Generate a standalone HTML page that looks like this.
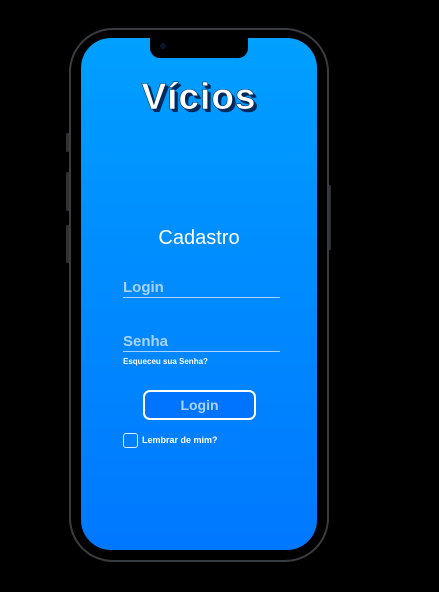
<!DOCTYPE html>
<html><head><meta charset="utf-8">
<style>
html,body{margin:0;padding:0;background:#000;width:439px;height:592px;overflow:hidden;font-family:"Liberation Sans",sans-serif}
.frame{position:absolute;left:69px;top:28px;width:256px;height:530px;border:2px solid #3a3d40;border-radius:44px;background:#000}
.btn{position:absolute;width:3px;background:#2e3134;border-radius:1px}
.screen{position:absolute;left:81px;top:38px;width:236px;height:512px;border-radius:30px;background:linear-gradient(#00a0ff 0%,#0090ff 35%,#0078ff 100%);overflow:hidden}
.notch{position:absolute;left:69px;top:0;width:98px;height:20px;background:#000;border-radius:0 0 10px 10px}
.cam{position:absolute;left:10px;top:5px;width:6px;height:6px;border-radius:50%;background:#0a1430}
.logo{position:absolute;left:0;width:100%;top:38px;text-align:center;font-size:37px;font-weight:900;color:#fff;letter-spacing:1px;text-shadow:2px 2px 0 #002a5a,3px 3px 0 #002a5a;-webkit-text-stroke:0.6px #003070}
.title{position:absolute;left:0;width:100%;top:189px;text-align:center;color:#fff;font-size:20px}
.field{position:absolute;left:42px;width:157px;border-bottom:1px solid #a9d3ff;color:#a9d3ff;font-weight:bold;font-size:15px;padding-bottom:1px}
.small{position:absolute;left:42px;top:319px;color:#fff;font-size:8px;font-weight:bold}
.lbtn{position:absolute;left:62px;top:352px;width:109px;height:26px;border:2px solid #fff;border-radius:7px;box-sizing:content-box;color:#a9d3ff;font-weight:bold;font-size:14px;text-align:center;line-height:26px;background:#0074ff}
.chk{position:absolute;left:42px;top:395px;width:13px;height:13px;border:1.5px solid #dfeeff;border-radius:3px}
.rem{position:absolute;left:61px;top:397px;color:#fff;font-size:9px;font-weight:bold}
</style></head><body>
<div class="btn" style="left:66px;top:133px;height:19px"></div>
<div class="btn" style="left:66px;top:172px;height:39px"></div>
<div class="btn" style="left:66px;top:225px;height:38px"></div>
<div class="btn" style="left:328px;top:185px;height:65px"></div>
<div class="frame"></div>
<div class="screen">
  <div class="notch"><div class="cam"></div></div>
  <div class="logo">Vícios</div>
  <div class="title">Cadastro</div>
  <div class="field" style="top:241px">Login</div>
  <div class="field" style="top:295px">Senha</div>
  <div class="small">Esqueceu sua Senha?</div>
  <div class="lbtn">Login</div>
  <div class="chk"></div>
  <div class="rem">Lembrar de mim?</div>
</div>
</body></html>
